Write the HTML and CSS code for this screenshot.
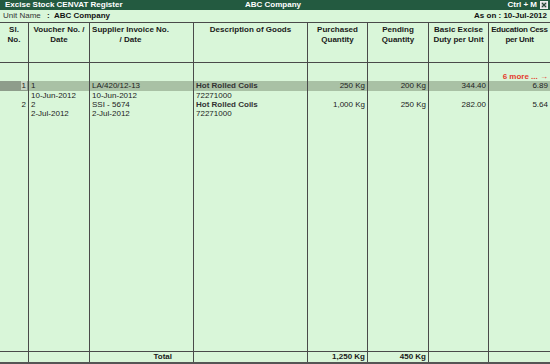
FILE: index.html
```html
<!DOCTYPE html>
<html>
<head>
    <title>Excise Stock CENVAT Register</title>
    <link rel="stylesheet" href="styles.css">
</head>
<body>
    <div class="title-bar">
        <span class="title">Excise Stock CENVAT Register</span>
        <span class="company">ABC Company</span>
        <span class="shortcut">Ctrl + M
            <svg class="close-box" width="8" height="8" viewBox="0 0 8 8">
                <rect x="0.5" y="0.5" width="7" height="7" fill="#d8d8d8" stroke="#f0f0f0"/>
                <path d="M2 2 L6 6 M6 2 L2 6" stroke="#2a4a3a" stroke-width="1.2"/>
            </svg>
        </span>
    </div>

    <div class="info-bar">
        <span class="info-label">Unit Name</span>
        <span class="info-colon">:</span>
        <span class="info-value">ABC Company</span>
        <span class="as-on">As on : 10-Jul-2012</span>
    </div>

    <table class="register">
        <colgroup>
            <col style="width: 28px">
            <col style="width: 61px">
            <col style="width: 104px">
            <col style="width: 114px">
            <col style="width: 60px">
            <col style="width: 61px">
            <col style="width: 60px">
            <col style="width: 62px">
        </colgroup>
        <thead>
            <tr>
                <th>Sl.<br>No.</th>
                <th>Voucher No. /<br>Date</th>
                <th class="shifted">Supplier Invoice No.<br>/ Date</th>
                <th>Description of Goods</th>
                <th>Purchased<br>Quantity</th>
                <th>Pending<br>Quantity</th>
                <th>Basic Excise<br>Duty per Unit</th>
                <th class="tight">Education Cess<br>per Unit</th>
            </tr>
        </thead>
        <tbody>
            <tr class="spacer-row">
                <td></td><td></td><td></td><td></td><td></td><td></td><td></td>
                <td class="more">6 more ... &rarr;</td>
            </tr>
            <tr class="line-row selected">
                <td class="num sel-cell"><span>1</span></td>
                <td>1</td>
                <td>LA/420/12-13</td>
                <td class="item">Hot Rolled Coils</td>
                <td class="num">250 Kg</td>
                <td class="num">200 Kg</td>
                <td class="num">344.40</td>
                <td class="num">6.89</td>
            </tr>
            <tr class="line-row">
                <td></td>
                <td>10-Jun-2012</td>
                <td>10-Jun-2012</td>
                <td>72271000</td>
                <td></td><td></td><td></td><td></td>
            </tr>
            <tr class="line-row">
                <td class="num">2</td>
                <td>2</td>
                <td>SSI - 5674</td>
                <td class="item">Hot Rolled Coils</td>
                <td class="num">1,000 Kg</td>
                <td class="num">250 Kg</td>
                <td class="num">282.00</td>
                <td class="num">5.64</td>
            </tr>
            <tr class="line-row">
                <td></td>
                <td>2-Jul-2012</td>
                <td>2-Jul-2012</td>
                <td>72271000</td>
                <td></td><td></td><td></td><td></td>
            </tr>
            <tr class="filler-row">
                <td></td><td></td><td></td><td></td><td></td><td></td><td></td><td></td>
            </tr>
        </tbody>
        <tfoot>
            <tr>
                <td></td>
                <td></td>
                <td class="total-label">Total</td>
                <td></td>
                <td class="num">1,250 Kg</td>
                <td class="num">450 Kg</td>
                <td></td>
                <td></td>
            </tr>
        </tfoot>
    </table>
</body>
</html>
```

FILE: styles.css
```css
body {
    margin: 0;
    background: #d9f6d9;
    color: #222;
    font-family: "Liberation Sans", Arial, sans-serif;
    font-size: 8px;
    width: 550px;
    height: 364px;
    overflow: hidden;
}
.title-bar {
    display: grid;
    grid-template-columns: 1fr auto 1fr;
    align-items: center;
    height: 10px;
    background: #235a40;
    color: #fff;
    font-weight: bold;
    line-height: 10px;
}
.title {
    padding-left: 5px;
}
.company {
    margin-right: 4px;
}
.shortcut {
    display: flex;
    align-items: center;
    justify-content: flex-end;
    gap: 3px;
    padding-right: 2px;
}
.close-box {
    display: block;
}
.info-bar {
    display: flex;
    align-items: center;
    height: 12px;
    line-height: 12px;
    padding-left: 3px;
    padding-right: 3px;
}
.info-label {
    color: #333;
    width: 44px;
}
.info-colon {
    font-weight: bold;
    width: 7px;
}
.info-value {
    font-weight: bold;
    color: #111;
}
.as-on {
    margin-left: auto;
    font-weight: bold;
    color: #111;
}
.register {
    width: 550px;
    table-layout: fixed;
    border-collapse: separate;
    border-spacing: 0;
    border-top: 1px solid #4a4a4a;
    border-bottom: 2px solid #555;
}
.register th,
.register td {
    padding: 0 2px;
    border-left: 1px solid #4a4a4a;
    white-space: nowrap;
    overflow: hidden;
}
.register th:first-child,
.register td:first-child {
    border-left: none;
}
.register th {
    height: 37px;
    padding: 2px 0 0;
    vertical-align: top;
    font-weight: bold;
    color: #1a1a1a;
    line-height: 9.5px;
    text-align: center;
    border-bottom: 1px solid #4a4a4a;
    overflow: visible;
}
.register th.shifted {
    padding-right: 22px;
}
.register th.tight {
    letter-spacing: -0.25px;
}
.spacer-row td {
    height: 18px;
    vertical-align: bottom;
    line-height: 9px;
}
.more {
    text-align: right;
    color: #e53a2e;
    font-weight: bold;
    padding-bottom: 1px;
}
.line-row td {
    height: 9px;
    line-height: 9px;
}
.line-row.selected td {
    height: 10px;
    line-height: 10px;
    background: #a9c1a5;
}
.line-row.selected td.sel-cell {
    background: #8e9d8b;
    padding-right: 1px;
}
.sel-cell span {
    background: #c5d3c2;
    padding: 0 1px;
}
.num {
    text-align: right;
}
.item {
    font-weight: bold;
    color: #333;
}
.filler-row td {
    height: 233px;
}
.register tfoot td {
    height: 10px;
    line-height: 10px;
    border-top: 1px solid #4a4a4a;
    font-weight: bold;
    color: #1a1a1a;
}
.register tfoot td.total-label {
    text-align: right;
    padding-right: 21px;
}
```
